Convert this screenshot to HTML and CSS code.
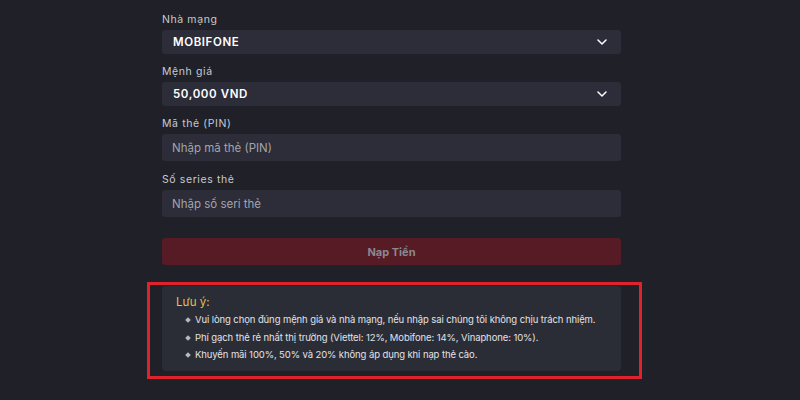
FILE: index.html
```html
<!DOCTYPE html>
<html>
<head>
  <title>Nạp thẻ cào</title>
  <link rel="stylesheet" href="styles.css">
</head>
<body>
  <div class="card-form">
    <form id="topup-form">
      <label class="field-label" for="network">Nhà mạng</label>
      <div class="select-box" id="network">
        <span>MOBIFONE</span>
        <svg class="chevron" width="10" height="6" viewBox="0 0 10 6"><polyline points="1,1 5,5 9,1" fill="none" stroke="#fff" stroke-width="1.5" stroke-linecap="round" stroke-linejoin="round"/></svg>
      </div>

      <label class="field-label" for="amount">Mệnh giá</label>
      <div class="select-box" id="amount">
        <span>50,000 VND</span>
        <svg class="chevron" width="10" height="6" viewBox="0 0 10 6"><polyline points="1,1 5,5 9,1" fill="none" stroke="#fff" stroke-width="1.5" stroke-linecap="round" stroke-linejoin="round"/></svg>
      </div>

      <label class="field-label" for="pin">Mã thẻ (PIN)</label>
      <input class="text-input" type="text" id="pin" placeholder="Nhập mã thẻ (PIN)">

      <label class="field-label" for="serial">Số series thẻ</label>
      <input class="text-input" type="text" id="serial" placeholder="Nhập số seri thẻ">

      <button class="submit-btn" type="submit" disabled>Nạp Tiền</button>
    </form>

    <div class="note-highlight">
      <div class="note">
        <div class="note-title">Lưu ý:</div>
        <ul class="note-list">
          <li>Vui lòng chọn đúng mệnh giá và nhà mạng, nếu nhập sai chúng tôi không chịu trách nhiệm.</li>
          <li>Phí gạch thẻ rẻ nhất thị trường (Viettel: 12%, Mobifone: 14%, Vinaphone: 10%).</li>
          <li>Khuyến mãi 100%, 50% và 20% không áp dụng khi nạp thẻ cào.</li>
        </ul>
      </div>
    </div>
  </div>
</body>
</html>
```

FILE: styles.css
```css
body {
  margin: 0;
  background: #1f2028;
  font-family: Inter, "Noto Sans", sans-serif;
  color: #e6e6ea;
}
.card-form {
  width: 459px;
  padding: 13px 0 0 162px;
}
#topup-form {
  display: flex;
  flex-direction: column;
}
.field-label {
  font-size: 10.5px;
  line-height: 14px;
  letter-spacing: 0.6px;
  color: #c9c9ce;
  margin-bottom: 3px;
}
.select-box {
  display: flex;
  justify-content: space-between;
  align-items: center;
  height: 24px;
  padding: 0 14px 0 11px;
  margin-bottom: 11px;
  background: #2c2d38;
  border-radius: 3px;
  font-size: 11.5px;
  font-weight: 600;
  letter-spacing: 0.6px;
  color: #fff;
}
.chevron {
  display: block;
}
.text-input {
  height: 27px;
  padding: 0 10px;
  margin-bottom: 12px;
  border: none;
  border-radius: 3px;
  background: #2c2d38;
  font-family: inherit;
  font-size: 11.5px;
  color: #fff;
}
.text-input::placeholder {
  color: #a3a3ab;
}
.text-input:last-of-type {
  margin-bottom: 21px;
}
.submit-btn {
  height: 27px;
  border: none;
  border-radius: 3px;
  background: #561b25;
  font-family: inherit;
  font-size: 11px;
  font-weight: 700;
  color: #8b8890;
}
.note-highlight {
  width: 474px;
  margin: 17px 0 0 -15px;
  padding: 1px 3px 5px 12px;
  border: 3px solid #e0222c;
}
.note {
  width: 431px;
  padding: 8px 14px 7px;
  background: #2b2d36;
  border-radius: 4px;
}
.note-title {
  font-size: 11.5px;
  line-height: 16px;
  color: #e9c04c;
  margin-bottom: 1px;
}
.note-list {
  list-style: none;
  margin: 0;
  padding: 0 0 0 10px;
}
.note-list li {
  position: relative;
  padding-left: 9px;
  font-size: 9.5px;
  line-height: 17.5px;
  letter-spacing: -0.1px;
  white-space: nowrap;
  color: #e2e2e6;
}
.note-list li::before {
  content: "";
  position: absolute;
  left: 0;
  top: 7px;
  width: 4px;
  height: 4px;
  background: #b8b8be;
  transform: rotate(45deg);
}
```
